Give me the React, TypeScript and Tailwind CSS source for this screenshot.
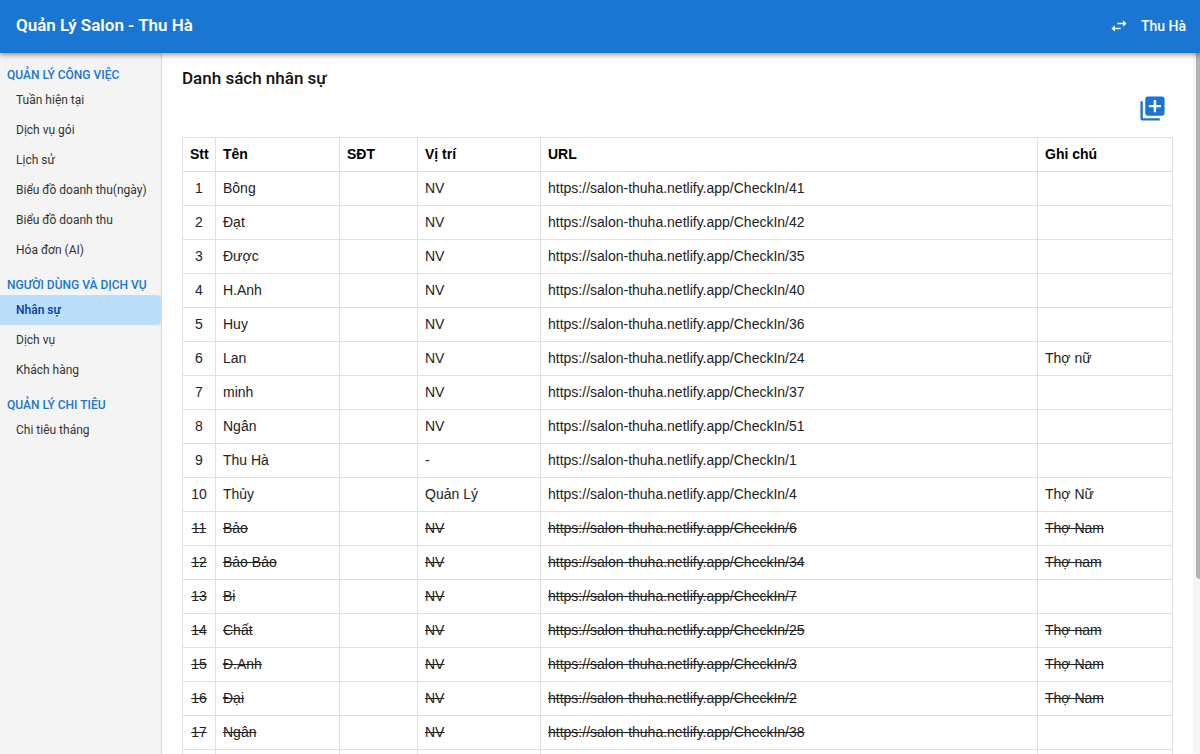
import clsx from "clsx";
import { MdLibraryAdd, MdSwapHoriz } from "react-icons/md";

type Staff = {
  name: string;
  role: string;
  checkIn: number;
  note?: string;
  inactive?: boolean;
};

const menu = [
  {
    title: "QUẢN LÝ CÔNG VIỆC",
    items: ["Tuần hiện tại", "Dịch vụ gói", "Lịch sử", "Biểu đồ doanh thu(ngày)", "Biểu đồ doanh thu", "Hóa đơn (AI)"],
  },
  { title: "NGƯỜI DÙNG VÀ DỊCH VỤ", items: ["Nhân sự", "Dịch vụ", "Khách hàng"] },
  { title: "QUẢN LÝ CHI TIÊU", items: ["Chi tiêu tháng"] },
];

const staff: Staff[] = [
  { name: "Bông", role: "NV", checkIn: 41 },
  { name: "Đạt", role: "NV", checkIn: 42 },
  { name: "Được", role: "NV", checkIn: 35 },
  { name: "H.Anh", role: "NV", checkIn: 40 },
  { name: "Huy", role: "NV", checkIn: 36 },
  { name: "Lan", role: "NV", checkIn: 24, note: "Thợ nữ" },
  { name: "minh", role: "NV", checkIn: 37 },
  { name: "Ngân", role: "NV", checkIn: 51 },
  { name: "Thu Hà", role: "-", checkIn: 1 },
  { name: "Thủy", role: "Quản Lý", checkIn: 4, note: "Thợ Nữ" },
  { name: "Bảo", role: "NV", checkIn: 6, note: "Thợ Nam", inactive: true },
  { name: "Bảo Bảo", role: "NV", checkIn: 34, note: "Thợ nam", inactive: true },
  { name: "Bi", role: "NV", checkIn: 7, inactive: true },
  { name: "Chất", role: "NV", checkIn: 25, note: "Thợ nam", inactive: true },
  { name: "Đ.Anh", role: "NV", checkIn: 3, note: "Thợ Nam", inactive: true },
  { name: "Đại", role: "NV", checkIn: 2, note: "Thợ Nam", inactive: true },
  { name: "Ngân", role: "NV", checkIn: 38, inactive: true },
];

function Header() {
  return (
    <header className="z-10 flex h-[53px] shrink-0 items-center justify-between bg-[#1976d2] pr-3.5 pb-px pl-4 text-white shadow-[0_2px_5px_rgba(0,0,0,0.4)]">
      <h1 className="text-[17px] font-semibold">Quản Lý Salon - Thu Hà</h1>
      <div className="flex items-center gap-3">
        <button type="button" aria-label="Đổi tài khoản">
          <MdSwapHoriz size={20} />
        </button>
        <span className="text-sm font-medium">Thu Hà</span>
      </div>
    </header>
  );
}

function Sidebar() {
  return (
    <nav className="w-[162px] shrink-0 border-r border-[#d8d8d8] bg-[#f4f4f4] pt-3">
      {menu.map((group) => (
        <section key={group.title} className="mb-2.5">
          <h2 className="pl-[7px] text-xs leading-5 font-medium whitespace-nowrap text-[#1976d2]">{group.title}</h2>
          <ul>
            {group.items.map((item) => (
              <li key={item}>
                <a
                  href="#"
                  className={clsx(
                    "block rounded-r pl-4 text-xs leading-[30px] whitespace-nowrap",
                    item === "Nhân sự" ? "bg-[#bbdefb] font-semibold text-[#0d47a1]" : "text-[#333]"
                  )}
                >
                  {item}
                </a>
              </li>
            ))}
          </ul>
        </section>
      ))}
    </nav>
  );
}

function StaffTable() {
  return (
    <table className="w-full table-fixed border-collapse font-['Liberation_Sans',Arial,sans-serif] text-sm text-[#222] [&_td]:h-[34px] [&_td]:border [&_td]:border-[#e0e0e0] [&_td]:px-[7px] [&_td]:pb-0.5 [&_th]:h-[34px] [&_th]:border [&_th]:border-[#e0e0e0] [&_th]:px-[7px] [&_th]:pb-0.5">
      <colgroup>
        <col className="w-[33px]" />
        <col className="w-[124px]" />
        <col className="w-[78px]" />
        <col className="w-[123px]" />
        <col />
        <col className="w-[135px]" />
      </colgroup>
      <thead>
        <tr className="text-left text-black">
          <th>Stt</th>
          <th>Tên</th>
          <th>SĐT</th>
          <th>Vị trí</th>
          <th>URL</th>
          <th>Ghi chú</th>
        </tr>
      </thead>
      <tbody>
        {staff.map((person, i) => (
          <tr key={person.checkIn} className={clsx(person.inactive && "line-through")}>
            <td className="text-center">{i + 1}</td>
            <td>{person.name}</td>
            <td></td>
            <td>{person.role}</td>
            <td>{`https://salon-thuha.netlify.app/CheckIn/${person.checkIn}`}</td>
            <td>{person.note}</td>
          </tr>
        ))}
        <tr>
          <td></td>
          <td></td>
          <td></td>
          <td></td>
          <td></td>
          <td></td>
        </tr>
      </tbody>
    </table>
  );
}

export default function App() {
  return (
    <div className="flex h-screen flex-col overflow-hidden bg-white font-[Roboto,sans-serif]">
      <Header />
      <div className="flex min-h-0 flex-1">
        <Sidebar />
        <main className="min-w-0 flex-1 overflow-hidden px-5 pt-[13px]">
          <h2 className="text-[17px] leading-6 font-medium text-[#111]">Danh sách nhân sự</h2>
          <div className="mt-1 mb-3.5 flex justify-end pr-1.5">
            <button type="button" aria-label="Thêm nhân sự" className="text-[#1976d2]">
              <MdLibraryAdd size={29} />
            </button>
          </div>
          <StaffTable />
        </main>
        <div aria-hidden="true" className="w-[7px] shrink-0 bg-[#f5f5f5] pl-[3px]">
          <div className="h-3/4 rounded-bl bg-[#b3b3b3]" />
        </div>
      </div>
    </div>
  );
}
